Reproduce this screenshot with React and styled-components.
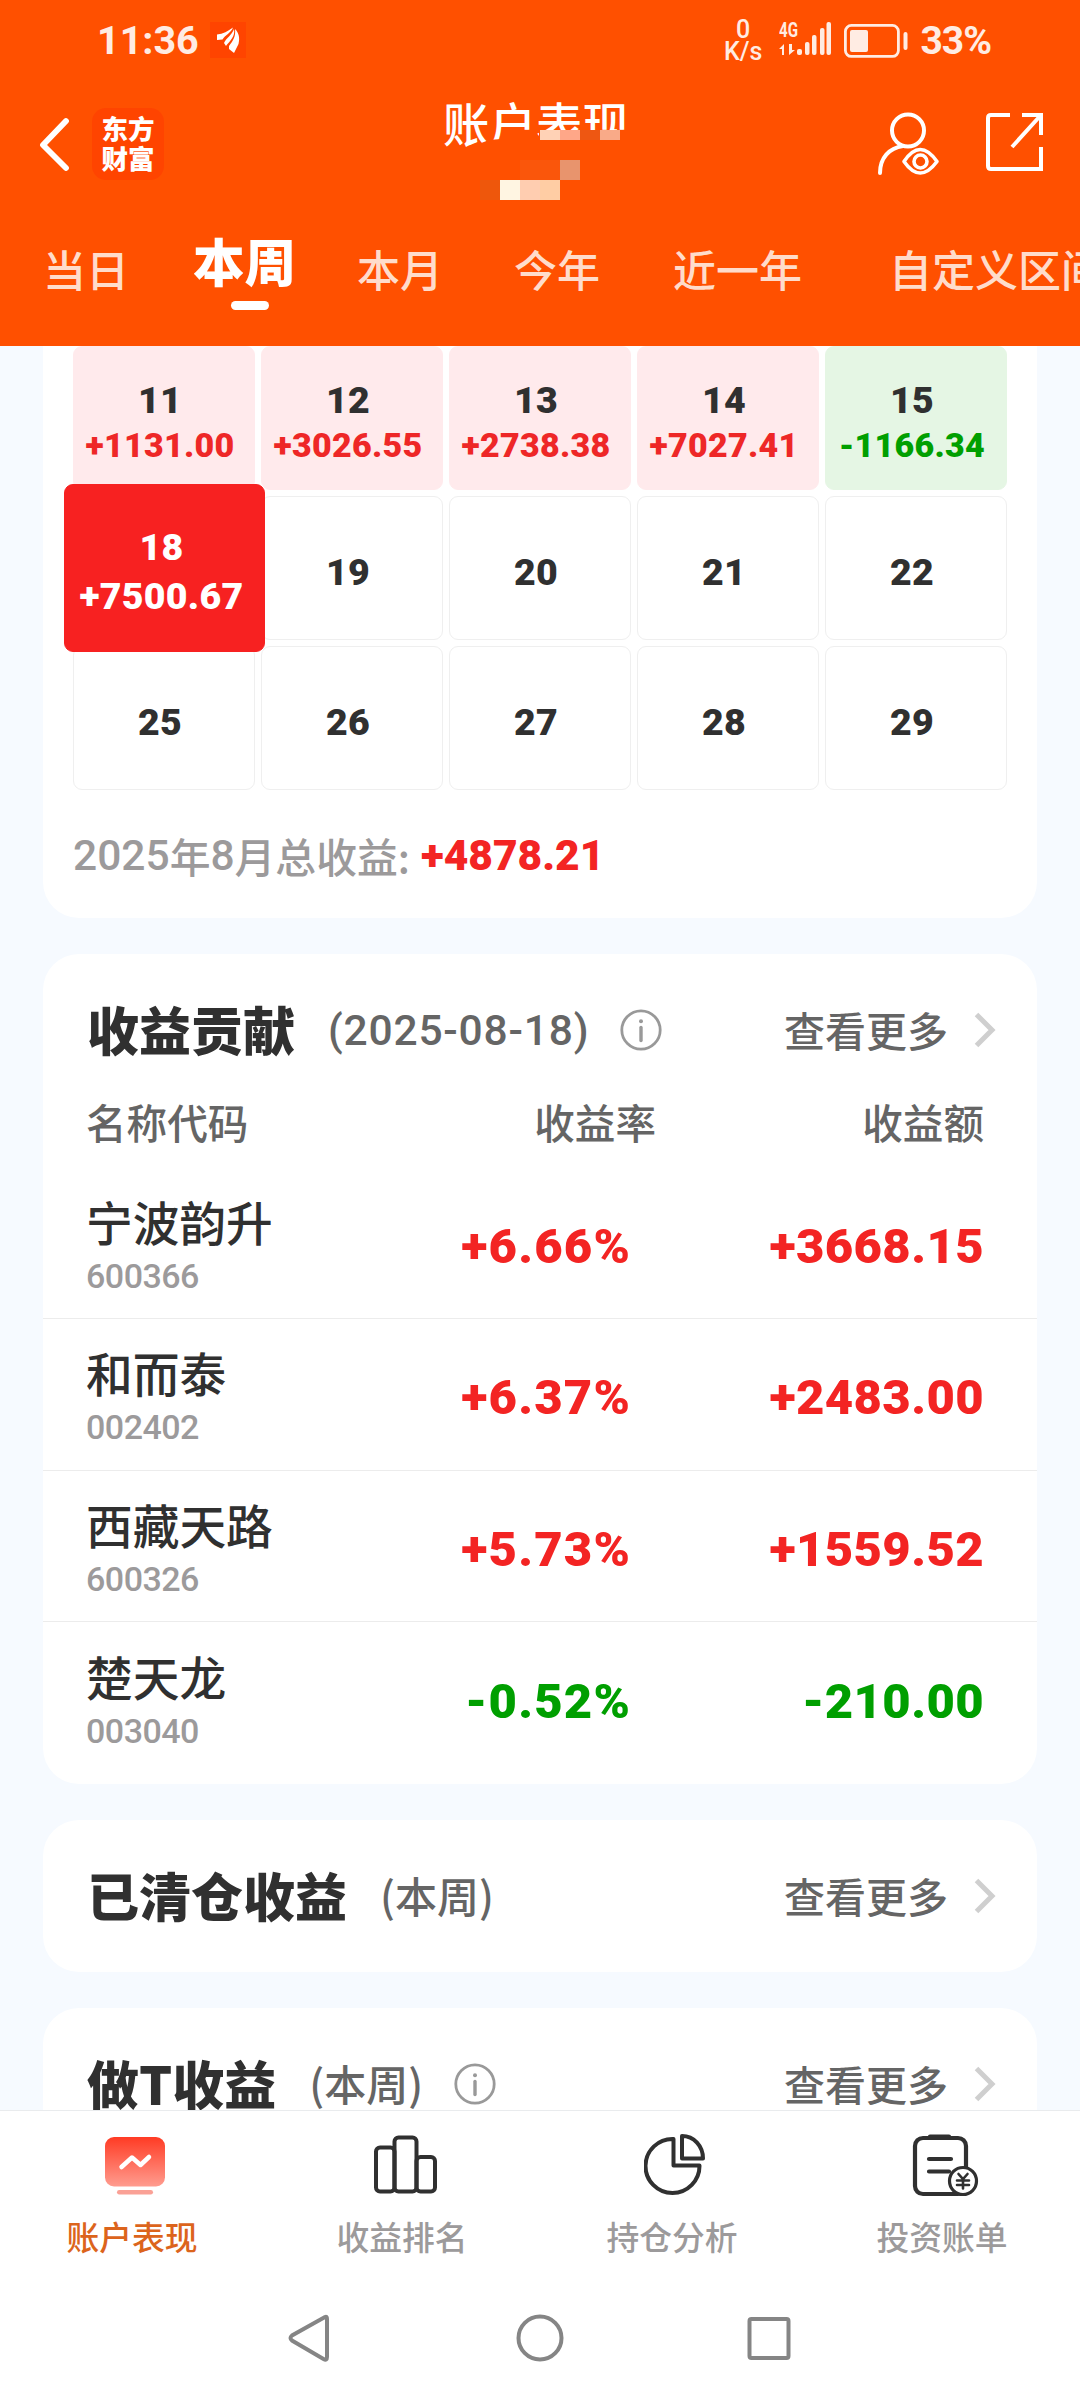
import React from "react"
import styled, { createGlobalStyle, css } from "styled-components"

const GlobalStyle = createGlobalStyle`
  * {
    box-sizing: border-box;
  }
  body {
    margin: 0;
    background: #fff;
    font-family: "Noto Sans CJK SC", sans-serif;
    font-weight: 500;
  }
  svg {
    display: block;
    flex: none;
  }
`

const Screen = styled.div`
  width: 1080px;
  height: 2400px;
  display: flex;
  flex-direction: column;
  overflow: hidden;
  background: #f6faff;
`

const Header = styled.header`
  height: 346px;
  flex: none;
  overflow: hidden;
  background: #ff5000;
  color: #fff;
`

const StatusBar = styled.div`
  height: 82px;
  padding: 0 89px 0 97px;
  display: flex;
  align-items: center;
  font-family: Roboto, sans-serif;
  color: #ffece3;
`

const Time = styled.div`
  font-size: 39.5px;
  font-weight: 700;
  line-height: 82px;
`

const AppBadge = styled.div`
  width: 36px;
  height: 36px;
  margin: 0 auto 3px 11px;
  background: #ff4400;
`

const NetSpeed = styled.div`
  margin-right: 17px;
  font-size: 25px;
  line-height: 22px;
  text-align: center;
`

const Percent = styled.div`
  margin-left: 11px;
  font-size: 39px;
  font-weight: 700;
  line-height: 46px;
  letter-spacing: -1px;
`

const TitleBar = styled.div`
  position: relative;
  height: 124px;
  padding: 0 36px 0 38px;
  display: flex;
  align-items: center;
`

const Brand = styled.div`
  width: 72px;
  height: 72px;
  margin-left: 22px;
  padding: 5px 0 0 0;
  border-radius: 14px;
  background: #ff4400;
  font-size: 26.5px;
  font-weight: 900;
  line-height: 30px;
  text-align: center;
`

const PageTitle = styled.div`
  position: absolute;
  left: 443px;
  top: 8px;
  width: 190px;
  font-size: 46.5px;
  line-height: 64px;
  clip-path: polygon(0 0, 100% 0, 100% 40px, 96px 40px, 96px 46px, 46px 50px, 20px 60px, 0 60px);
`

const Mosaic = styled.svg`
  position: absolute;
  left: 480px;
  top: 48px;
`

const HeaderActions = styled.div`
  margin-left: auto;
  display: flex;
  gap: 46px;
`

const Tabs = styled.nav`
  height: 140px;
  padding-left: 43px;
  display: flex;
  white-space: nowrap;
`

const Tab = styled.div`
  flex: none;
  margin-left: ${({ $gap }) => $gap}px;
  padding-top: 32px;
  font-size: 43px;
  line-height: 60px;
  color: #ffdccb;
  ${({ $active }) =>
    $active &&
    css`
      padding-top: 24px;
      font-size: 51.5px;
      font-weight: 900;
      color: #fff;
      &::after {
        content: "";
        display: block;
        width: 38px;
        height: 9px;
        margin: 11px 0 0 38px;
        border-radius: 5px;
        background: #fff;
      }
    `}
`

const Content = styled.main`
  flex: 1;
  min-height: 0;
  padding: 0 43px;
  overflow: hidden;
  display: flex;
  flex-direction: column;
  gap: 36px;
`

const Card = styled.section`
  flex: none;
  height: ${({ $height }) => $height}px;
  border-radius: ${({ $flatTop }) => ($flatTop ? "0 0 36px 36px" : "36px")};
  background: #fff;
`

const Calendar = styled.div`
  padding: 0 30px;
  display: grid;
  grid-template-columns: repeat(5, 1fr);
  grid-auto-rows: 144px;
  gap: 6px;
`

const tones = {
  up: "#ffeaec",
  down: "#e5f6e4",
}

const Cell = styled.div`
  padding: ${({ $tone }) => ($tone ? "31px 8px 0 0" : "53px 8px 0 0")};
  border: 1px solid ${({ $tone }) => tones[$tone] || "#efefef"};
  border-radius: 9px;
  background: ${({ $tone }) => tones[$tone] || "#fff"};
  font-family: Roboto, sans-serif;
  font-weight: 900;
  text-align: center;
  color: #303030;
  ${({ $selected }) =>
    $selected &&
    css`
      position: relative;
      z-index: 1;
      margin: -12px -10px -12px -9px;
      padding: 40px 6px 0 0;
      border-color: #f72121;
      background: #f72121;
      color: #fff;
    `}
`

const Day = styled.div`
  font-size: 37.5px;
  line-height: 44px;
  letter-spacing: 0.3px;
`

const DayProfit = styled.div`
  margin-top: ${({ $large }) => ($large ? 5 : 1)}px;
  font-size: ${({ $large }) => ($large ? 37.5 : 34)}px;
  line-height: 44px;
  letter-spacing: 0.3px;
  color: ${({ $color }) => $color};
`

const Total = styled.div`
  padding: 36px 0 0 30px;
  display: flex;
  align-items: center;
  font-size: 40.8px;
  line-height: 60px;
  color: #9c9a9b;
`

const Num = styled.span`
  font-family: Roboto, sans-serif;
  font-size: 42.5px;
  font-weight: ${({ $heavy }) => ($heavy ? 900 : 500)};
  letter-spacing: ${({ $spacing }) => $spacing || 0}px;
  color: ${({ $heavy }) => ($heavy ? "#f32423" : "inherit")};
  margin-left: ${({ $heavy }) => ($heavy ? 11 : 0)}px;
`

const TitleRow = styled.div`
  height: 116px;
  padding: 36px 41px 0 44px;
  display: flex;
  align-items: center;
`

const Title = styled.h2`
  margin: 0;
  font-size: 52px;
  font-weight: 900;
  line-height: 78px;
  padding-bottom: 2px;
  color: #303030;
`

const Period = styled.div`
  margin: 0 31px 0 33px;
  padding-bottom: 2px;
  font-size: 42px;
  line-height: 78px;
  color: #656565;
`

const More = styled.div`
  margin-left: auto;
  display: flex;
  align-items: center;
  gap: 26px;
  font-size: 41px;
  line-height: 78px;
  color: #656565;
  span {
    padding-bottom: 2px;
  }
`

const TableHead = styled.div`
  height: 97.4px;
  padding: 22px 53px 0 43px;
  display: grid;
  grid-template-columns: 1fr 200px 328px;
  font-size: 40.6px;
  line-height: 60px;
  color: #656565;
  div + div {
    text-align: right;
  }
`

const StockRow = styled.div`
  height: 151.6px;
  padding: 0 53px 0 43px;
  display: grid;
  grid-template-columns: 1fr 250px 353px;
  align-items: center;
  border-bottom: 1px solid #ececec;
  &:last-child {
    border-bottom: 0;
  }
`

const StockName = styled.div`
  padding-top: 7px;
  font-size: 46.7px;
  line-height: 56px;
  color: #303030;
`

const StockCode = styled.div`
  padding-top: 3px;
  font-family: Roboto, sans-serif;
  font-size: 34px;
  line-height: 48px;
  letter-spacing: -0.5px;
  color: #9c9a9b;
`

const Amount = styled.div`
  padding-top: 7px;
  font-family: Roboto, sans-serif;
  font-size: 49px;
  font-weight: 900;
  letter-spacing: ${({ $spacing }) => $spacing}px;
  text-align: right;
  color: ${({ $down }) => ($down ? "#009f00" : "#f32423")};
`

const TabBar = styled.nav`
  height: 170px;
  flex: none;
  border-top: 1px solid #e9ebed;
  background: #fff;
  display: grid;
  grid-template-columns: repeat(4, 1fr);
`

const TabItem = styled.div`
  padding-top: 22px;
  display: flex;
  flex-direction: column;
  align-items: center;
  svg {
    margin: 0 0 17px 2px;
  }
`

const TabLabel = styled.div`
  margin-right: 6px;
  font-size: 32.8px;
  line-height: 44px;
  color: ${({ $active }) => ($active ? "#dc641c" : "#9c9a9b")};
`

const SystemNav = styled.div`
  height: 120px;
  flex: none;
  background: #fff;
  svg {
    margin: 0 auto;
  }
`

const InfoIcon = () => (
  <svg width="42" height="42" viewBox="0 0 42 42" fill="none" stroke="#999">
    <circle cx="21" cy="21" r="19.2" strokeWidth="2.8" />
    <circle cx="21" cy="12.3" r="2" fill="#999" stroke="none" />
    <path d="M21 18.5v13" strokeWidth="3.4" strokeLinecap="round" />
  </svg>
)

const Arrow = () => (
  <svg width="22" height="36" viewBox="0 0 22 36" fill="none" stroke="#cfcfcf" strokeWidth="5">
    <path d="M2.5 2.5 18 18 2.5 33.5" />
  </svg>
)

const MoreLink = () => (
  <More>
    <span>查看更多</span>
    <Arrow />
  </More>
)

const days = [
  { day: 11, profit: "+1131.00", tone: "up" },
  { day: 12, profit: "+3026.55", tone: "up" },
  { day: 13, profit: "+2738.38", tone: "up" },
  { day: 14, profit: "+7027.41", tone: "up" },
  { day: 15, profit: "-1166.34", tone: "down" },
  { day: 18, profit: "+7500.67", selected: true },
  { day: 19 },
  { day: 20 },
  { day: 21 },
  { day: 22 },
  { day: 25 },
  { day: 26 },
  { day: 27 },
  { day: 28 },
  { day: 29 },
]

const stocks = [
  { name: "宁波韵升", code: "600366", rate: "+6.66%", amount: "+3668.15" },
  { name: "和而泰", code: "002402", rate: "+6.37%", amount: "+2483.00" },
  { name: "西藏天路", code: "600326", rate: "+5.73%", amount: "+1559.52" },
  { name: "楚天龙", code: "003040", rate: "-0.52%", amount: "-210.00", down: true },
]

const profitColor = ({ tone, selected }) => {
  if (selected) return "#fff"
  return tone === "down" ? "#009f00" : "#ee2727"
}

const App = () => {
  return (
    <>
      <GlobalStyle />
      <Screen>
        <Header>
          <StatusBar>
            <Time>11:36</Time>
            <AppBadge>
              <svg width="36" height="36" viewBox="0 0 36 36" fill="#fff">
                <path d="M7 12.500C13 12 18 9 23 5.500 21 11 15 13 12.500 17.500L7 18z" />
                <path d="M14 21C16 16 22 13 24 7c1.500 7-4 12-8 17z" />
                <path d="M19 24c4-5 7-10 6-17 4 4 5 9 3.500 15L24 31l-5-4z" />
              </svg>
            </AppBadge>
            <NetSpeed>
              0<br />
              K/s
            </NetSpeed>
            <svg width="52" height="40" viewBox="0 0 52 40" fill="#ffece3">
              <text x="0" y="16" fontSize="20" fontWeight="700" textLength="19" lengthAdjust="spacingAndGlyphs">
                4G
              </text>
              <path d="M0 28l5-5v11H3v-6zM10 34l6-5h-3v-6h-3z" />
              <rect x="18" y="28" width="5" height="6" rx="2" />
              <rect x="26" y="21" width="4.5" height="13" rx="2" />
              <rect x="33" y="14" width="4.5" height="20" rx="2" />
              <rect x="41" y="7" width="4.5" height="27" rx="2" />
              <rect x="47.5" y="1" width="4.5" height="33" rx="2" />
            </svg>
            <svg width="78" height="34" viewBox="0 0 78 34">
              <rect x="14.4" y="1.4" width="53" height="31" rx="6" fill="none" stroke="#ffece3" strokeWidth="2.8" />
              <rect x="19" y="6" width="18" height="22" rx="2" fill="#ffece3" />
              <rect x="72.5" y="8" width="4" height="18" rx="2" fill="#ffece3" />
            </svg>
            <Percent>33%</Percent>
          </StatusBar>

          <TitleBar>
            <svg width="32" height="54" viewBox="0 0 32 54" fill="none" stroke="#fff" strokeWidth="5.8" strokeLinecap="round" strokeLinejoin="round">
              <path d="M28 4 5 28l23 23" />
            </svg>
            <Brand>
              东方
              <br />
              财富
            </Brand>
            <PageTitle>账户表现</PageTitle>
            <Mosaic width="140" height="70" viewBox="0 0 140 70">
              <rect x="60" y="0" width="20" height="10" fill="#ffd2b6" />
              <rect x="80" y="0" width="20" height="10" fill="#ffa788" />
              <rect x="100" y="0" width="20" height="10" fill="#ee5712" />
              <rect x="120" y="0" width="20" height="10" fill="#f9aa88" />
              <rect x="40" y="30" width="40" height="20" fill="#fa560b" />
              <rect x="80" y="30" width="20" height="20" fill="#e8946d" />
              <rect x="0" y="50" width="20" height="20" fill="#ee570c" />
              <rect x="20" y="50" width="20" height="20" fill="#fff5e2" />
              <rect x="40" y="50" width="20" height="20" fill="#ffcdb0" />
              <rect x="60" y="50" width="20" height="20" fill="#ffcda4" />
            </Mosaic>
            <HeaderActions>
              <svg width="64" height="64" viewBox="0 0 64 64" fill="none" stroke="#fff" strokeWidth="4">
                <circle cx="32" cy="18.5" r="16" />
                <path d="M4 61c0-15 9-25 23-27" strokeLinecap="round" />
                <path d="M28 49.500q16-24 33 0q-17 23-33 0z" strokeWidth="3.6" strokeLinejoin="round" />
                <circle cx="44.500" cy="49.500" r="6.500" strokeWidth="3.6" />
              </svg>
              <svg width="58" height="60" viewBox="0 0 58 60" fill="none" stroke="#fff" strokeWidth="4">
                <path d="M24 3H5Q2 3 2 6v48q0 3 3 3h50V35M36 3h19v20M55 3 26 35" />
              </svg>
            </HeaderActions>
          </TitleBar>

          <Tabs>
            <Tab $gap={0}>当日</Tab>
            <Tab $gap={64} $active>
              本周
            </Tab>
            <Tab $gap={61}>本月</Tab>
            <Tab $gap={71}>今年</Tab>
            <Tab $gap={73}>近一年</Tab>
            <Tab $gap={87}>自定义区间</Tab>
          </Tabs>
        </Header>

        <Content>
          <Card $height={572} $flatTop>
            <Calendar>
              {days.map((item) => (
                <Cell key={item.day} $tone={item.tone} $selected={item.selected}>
                  <Day>{item.day}</Day>
                  {item.profit && (
                    <DayProfit $large={item.selected} $color={profitColor(item)}>
                      {item.profit}
                    </DayProfit>
                  )}
                </Cell>
              ))}
            </Calendar>
            <Total>
              <Num>2025</Num>年<Num>8</Num>月总收益:
              <Num $heavy>+4878.21</Num>
            </Total>
          </Card>

          <Card $height={830}>
            <TitleRow>
              <Title>收益贡献</Title>
              <Period>
                <Num $spacing={0.8}>(2025-08-18)</Num>
              </Period>
              <InfoIcon />
              <MoreLink />
            </TitleRow>
            <TableHead>
              <div>名称代码</div>
              <div>收益率</div>
              <div>收益额</div>
            </TableHead>
            <div>
              {stocks.map((stock) => (
                <StockRow key={stock.code}>
                  <div>
                    <StockName>{stock.name}</StockName>
                    <StockCode>{stock.code}</StockCode>
                  </div>
                  <Amount $spacing={1.2} $down={stock.down}>
                    {stock.rate}
                  </Amount>
                  <Amount $spacing={0.4} $down={stock.down}>
                    {stock.amount}
                  </Amount>
                </StockRow>
              ))}
            </div>
          </Card>

          <Card $height={152}>
            <TitleRow>
              <Title>已清仓收益</Title>
              <Period>(本周)</Period>
              <MoreLink />
            </TitleRow>
          </Card>

          <Card $height={152}>
            <TitleRow>
              <Title>做T收益</Title>
              <Period>(本周)</Period>
              <InfoIcon />
              <MoreLink />
            </TitleRow>
          </Card>
        </Content>

        <TabBar>
          <TabItem>
            <svg width="64" height="64" viewBox="0 0 64 64">
              <defs>
                <linearGradient id="screen" x1="0" y1="0" x2="0" y2="1">
                  <stop offset="0" stopColor="#ff3b24" />
                  <stop offset="1" stopColor="#ff9c8f" />
                </linearGradient>
              </defs>
              <rect x="1" y="4" width="60" height="49.500" rx="9" fill="url(#screen)" />
              <path d="M17.500 34 28 24.500l8.500 7.500 8.500-8" fill="none" stroke="#fff" strokeWidth="4.500" strokeLinecap="round" strokeLinejoin="round" />
              <rect x="13" y="57" width="36" height="4.500" rx="2.200" fill="#faa196" />
            </svg>
            <TabLabel $active>账户表现</TabLabel>
          </TabItem>
          <TabItem>
            <svg width="64" height="64" viewBox="0 0 64 64" fill="none" stroke="#303030" strokeWidth="4">
              <rect x="2" y="14.500" width="18.500" height="44" rx="4" />
              <rect x="20.500" y="4.500" width="22" height="54" rx="4" />
              <rect x="42.500" y="24" width="18.500" height="34.500" rx="4" />
            </svg>
            <TabLabel>收益排名</TabLabel>
          </TabItem>
          <TabItem>
            <svg width="64" height="64" viewBox="0 0 64 64" fill="none" stroke="#303030" strokeWidth="4" strokeLinejoin="round">
              <path d="M29.500 6A27 27 0 1 0 55.500 32.500H29.500z" />
              <path d="M38 3v22.500h21C59 13 50 3 38 3z" />
            </svg>
            <TabLabel>持仓分析</TabLabel>
          </TabItem>
          <TabItem>
            <svg width="68" height="64" viewBox="0 0 68 64" fill="none" stroke="#303030" strokeWidth="4.200" strokeLinecap="round">
              <rect x="3" y="5" width="51" height="56" rx="8" />
              <path d="M18 3.500h19M17 26h22M17 38.500h20" />
              <circle cx="51" cy="48" r="13.500" fill="#fff" strokeWidth="3.200" />
              <path d="M46.500 41l4.500 5 4.500-5M51 46v9.500M45 47.500h12M45 52h12" strokeWidth="2.600" />
            </svg>
            <TabLabel>投资账单</TabLabel>
          </TabItem>
        </TabBar>

        <SystemNav>
          <svg width="1080" height="120" viewBox="0 0 1080 120" fill="none" stroke="#858585" strokeWidth="4">
            <path d="M325 37Q327 36 327 39V77Q327 81 323.500 79L292 60.500Q289 58 292 55.500z" />
            <circle cx="540" cy="58" r="21.500" />
            <rect x="749.500" y="39" width="39" height="39" rx="2" />
          </svg>
        </SystemNav>
      </Screen>
    </>
  )
}

export default App
